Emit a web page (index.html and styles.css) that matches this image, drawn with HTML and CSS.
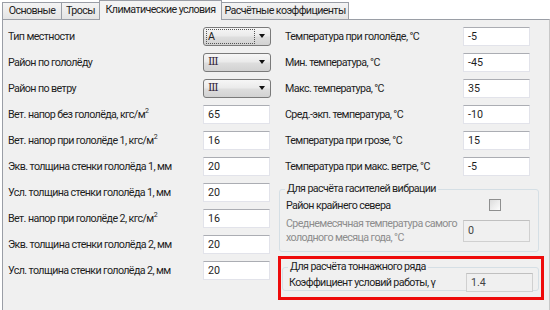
FILE: index.html
```html
<!DOCTYPE html>
<html>
<head>
<meta charset="utf-8">
<link rel="stylesheet" href="styles.css">
</head>
<body>
<div class="tabs">
  <div class="tab">Основные</div>
  <div class="tab">Тросы</div>
  <div class="tab active">Климатические условия</div>
  <div class="tab">Расчётные коэффициенты</div>
</div>
<div class="panel">
  <div class="col left">
    <div class="row"><span class="lbl">Тип местности</span><div class="combo"><span class="val focus">A</span><span class="arrow"></span></div></div>
    <div class="row"><span class="lbl">Район по гололёду</span><div class="combo"><span class="val roman">Ⅲ</span><span class="arrow"></span></div></div>
    <div class="row"><span class="lbl">Район по ветру</span><div class="combo"><span class="val roman">Ⅲ</span><span class="arrow"></span></div></div>
    <div class="row"><span class="lbl">Вет. напор без гололёда, кгс/м<sup>2</sup></span><div class="inp">65</div></div>
    <div class="row"><span class="lbl">Вет. напор при гололёде 1, кгс/м<sup>2</sup></span><div class="inp">16</div></div>
    <div class="row"><span class="lbl">Экв. толщина стенки гололёда 1, мм</span><div class="inp">20</div></div>
    <div class="row"><span class="lbl">Усл. толщина стенки гололёда 1, мм</span><div class="inp">20</div></div>
    <div class="row"><span class="lbl">Вет. напор при гололёде 2, кгс/м<sup>2</sup></span><div class="inp">16</div></div>
    <div class="row"><span class="lbl">Экв. толщина стенки гололёда 2, мм</span><div class="inp">20</div></div>
    <div class="row"><span class="lbl">Усл. толщина стенки гололёда 2, мм</span><div class="inp">20</div></div>
  </div>
  <div class="col right">
    <div class="row"><span class="lbl">Температура при гололёде, °C</span><div class="inp">-5</div></div>
    <div class="row"><span class="lbl">Мин. температура, °C</span><div class="inp">-45</div></div>
    <div class="row"><span class="lbl">Макс. температура, °C</span><div class="inp">35</div></div>
    <div class="row"><span class="lbl">Сред.-экп. температура, °C</span><div class="inp">-10</div></div>
    <div class="row"><span class="lbl">Температура при грозе, °C</span><div class="inp">15</div></div>
    <div class="row"><span class="lbl">Температура при макс. ветре, °C</span><div class="inp">-5</div></div>
    <fieldset class="group g1">
      <legend>Для расчёта гасителей вибрации</legend>
      <div class="grow chkrow"><span class="lbl">Район крайнего севера</span><span class="chk"></span></div>
      <div class="grow tall"><span class="lbl dis">Среднемесячная температура самого<br>холодного месяца года, °C</span><div class="inp disabled big">0</div></div>
    </fieldset>
    <div class="mark">
      <fieldset class="group g2">
        <legend>Для расчёта тоннажного ряда</legend>
        <div class="grow"><span class="lbl">Коэффициент условий работы, γ</span><div class="inp disabled">1.4</div></div>
      </fieldset>
    </div>
  </div>
</div>
</body>
</html>
```

FILE: styles.css
```css
html, body {
  margin: 0;
  padding: 0;
  background: #ffffff;
}
body {
  width: 550px;
  height: 310px;
  overflow: hidden;
  font-family: Roboto, "Noto Sans", sans-serif;
  font-size: 10.7px;
  letter-spacing: -0.6px;
  color: #1e1e1e;
}
.tabs {
  display: flex;
  align-items: flex-end;
  height: 19px;
  padding-left: 2px;
  position: relative;
  z-index: 2;
}
.tab {
  height: 17px;
  line-height: 16px;
  padding: 0;
  text-align: center;
  white-space: nowrap;
  border: 1px solid #9a9ea6;
  border-bottom: none;
  border-right: none;
  background: linear-gradient(#f4f4f4, #e4e4e4);
  box-sizing: border-box;
}
.tab:nth-child(1) { width: 59px; }
.tab:nth-child(2) { width: 38px; }
.tab:nth-child(4) { width: 127px; }
.tab:last-child { border-right: 1px solid #9a9ea6; }
.tab.active {
  width: 123px;
  height: 20px;
  line-height: 17px;
  background: #f3f3f3;
  border-right: 1px solid #9a9ea6;
  margin-bottom: -1px;
}
.tab.active + .tab { border-left: none; }
.panel {
  margin-left: 2px;
  height: 300px;
  box-sizing: border-box;
  border: 1px solid #9a9ea6;
  border-right: 1px solid #c8c8c8;
  background: #f0f0f0;
  display: flex;
  padding-top: 3px;
}
.col.left {
  width: 274px;
  padding-left: 5px;
  box-sizing: border-box;
}
.col.right {
  width: 270px;
  box-sizing: border-box;
}
.row {
  height: 26px;
  display: grid;
  align-items: center;
}
.left .row { grid-template-columns: 195px 68px; }
.right .row { grid-template-columns: 178px 67px; padding-left: 8px; }
.lbl { white-space: nowrap; }
.lbl sup { font-size: 7px; vertical-align: 5px; line-height: 0; }
.combo {
  width: 68px;
  height: 19px;
  box-sizing: border-box;
  border: 1px solid #7a7a7a;
  border-radius: 3px;
  background: linear-gradient(#f6f6f6 0%, #ebebeb 45%, #dddddd 55%, #d2d2d2 100%);
  display: flex;
  align-items: center;
  justify-content: space-between;
  padding: 0 5px 0 2px;
}
.val {
  height: 15px;
  line-height: 14px;
  box-sizing: border-box;
  padding-left: 1px;
  color: #222;
  letter-spacing: 0;
}
.val.focus {
  width: 49px;
  border: 1px dotted #555;
}
.val.roman {
  font-family: "DejaVu Serif", serif;
  font-size: 11px;
  color: #35283c;
  padding-left: 2px;
}
.arrow {
  width: 0;
  height: 0;
  border-left: 3.5px solid transparent;
  border-right: 3.5px solid transparent;
  border-top: 4px solid #111;
}
.inp {
  width: 67px;
  height: 19px;
  box-sizing: border-box;
  background: #ffffff;
  border: 1px solid #e2e3ea;
  border-top-color: #abadb3;
  padding-left: 4px;
  line-height: 17px;
  color: #1e1e1e;
  letter-spacing: 0;
}
.inp.disabled {
  background: #f0f0f0;
  border-color: #d0d0d0;
  border-top-color: #c0c0c0;
  color: #444;
}
.inp.big { height: 22px; line-height: 20px; }
.group {
  margin: 0;
  border: 1px solid #d5dfe5;
  border-radius: 3px;
  padding: 0 0 0 6px;
}
.group legend {
  padding: 0 2px;
  margin-left: -1px;
  line-height: 14px;
}
.g1 {
  margin-left: 2px;
  width: 260px;
  height: 70px;
  box-sizing: border-box;
  margin-top: 3px;
}
.grow {
  display: grid;
  grid-template-columns: 177px 67px;
  align-items: center;
}
.chkrow { height: 18px; }
.chk {
  width: 12px;
  height: 12px;
  box-sizing: border-box;
  border: 1px solid #8e8f8f;
  background: linear-gradient(135deg, #dcdcdc, #fdfdfd);
  margin-left: 26px;
}
.tall { height: 30px; margin-top: 2px; }
.dis { color: #8d8d8d; line-height: 14px; }
.mark {
  margin-top: 4px;
  margin-left: 1px;
  width: 266px;
  height: 44px;
  box-sizing: border-box;
  border: 3px solid #ee0b0b;
  padding: 0 3px 0 1px;
}
.g2 {
  height: 31px;
  box-sizing: border-box;
  margin-top: 1px;
  width: 257px;
}
.g2 .grow { height: 19px; margin-top: -1px; }
```
